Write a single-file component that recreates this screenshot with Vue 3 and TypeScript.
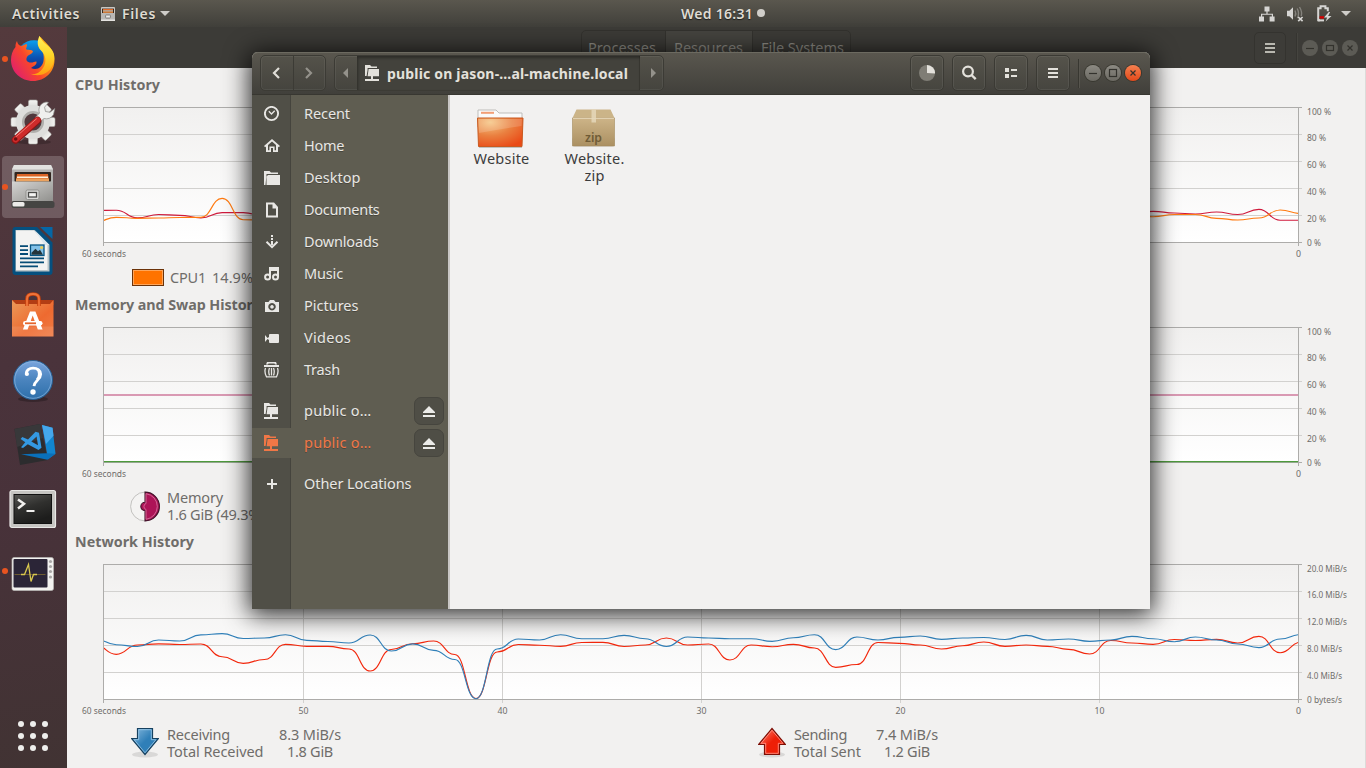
<script setup lang="ts">
interface Series { color: string; values: number[] }
interface Chart { top: number; ticks: { x: number; text: string }[]; labels: { text: string; width: number }[]; series: Series[] }

// Stretches or tightens a label's tracking so that it fills the given width.
const vFit = {
  mounted(el: HTMLElement, binding: { value: number }) {
    const count = (el.textContent || '').length
    if (!count) return
    const natural = el.getBoundingClientRect().width
    el.style.letterSpacing = ((binding.value - natural) / count).toFixed(3) + 'px'
  },
}

const FIRST_X = 95.1
const STEP = 21.16
const labelBaselines = [8, 34, 61, 88, 115, 139]
const timeTicks = [
  { x: 303.5, text: '50' }, { x: 502.5, text: '40' }, { x: 701.5, text: '30' },
  { x: 900.5, text: '20' }, { x: 1099.5, text: '10' },
]

function curve(values: number[], top: number): string {
  let d = ''
  values.forEach((v, i) => {
    const x = FIRST_X + i * STEP
    const y = v - top
    if (i === 0) d = `M${x.toFixed(1)} ${y.toFixed(1)}`
    else {
      const mid = (x - STEP / 2).toFixed(1)
      d += `C${mid} ${(values[i - 1] - top).toFixed(1)} ${mid} ${y.toFixed(1)} ${x.toFixed(1)} ${y.toFixed(1)}`
    }
  })
  return d
}

const flat = (v: number, n: number): number[] => Array.from({ length: n }, () => v)

const percent = [
  { text: '100 %', width: 24 }, { text: '80 %', width: 19 }, { text: '60 %', width: 19 },
  { text: '40 %', width: 19 }, { text: '20 %', width: 19 }, { text: '0 %', width: 14 },
]

const cpu: Chart = {
  top: 107,
  ticks: [],
  labels: percent,
  series: [
    { color: '#cf1a3c', values: [210.5, 210.2, 217.9, 214.5, 215.3, 217.8, 212.6, 212.6, 216, ...flat(214, 41), 211.3, 213, 214, 212, 214.5, 209.3, 220.2, 220.2] },
    { color: '#ff7a10', values: [222, 217.3, 218.3, 218, 217.5, 217.3, 198.4, 219.7, 220, ...flat(216, 41), 216.7, 214.5, 214.5, 218.3, 220, 218, 210, 213.5] },
  ],
}
const memory: Chart = {
  top: 327,
  ticks: [],
  labels: percent,
  series: [
    { color: '#b93c70', values: flat(395, 58) },
    { color: '#4e9a3c', values: flat(461.6, 58) },
  ],
}
const network: Chart = {
  top: 564,
  ticks: timeTicks,
  labels: [
    { text: '20.0 MiB/s', width: 40 }, { text: '16.0 MiB/s', width: 40 }, { text: '12.0 MiB/s', width: 40 },
    { text: '8.0 MiB/s', width: 35 }, { text: '4.0 MiB/s', width: 35 }, { text: '0 bytes/s', width: 35 },
  ],
  series: [
    { color: '#f2270c', values: [645, 654.3, 645, 643.8, 644.5, 644, 656.7, 663.3, 659.5, 644.3, 646.3, 646.3, 649, 671, 649.5, 643.7, 641, 654.5, 698.5, 652, 644.5, 645.2, 646.3, 642.5, 642.3, 646.5, 645, 638, 645, 644, 660, 645, 646.7, 644.3, 648, 667.3, 664.5, 642.5, 643.3, 645, 649, 645.7, 642, 646.3, 645, 646.3, 649.3, 654, 640.5, 643, 644.3, 639.5, 640.5, 639.3, 643, 636.3, 652.7, 642] },
    { color: '#2f7fb8', values: [639, 644.7, 646.5, 640, 641, 634.8, 633.6, 638.5, 638, 634.7, 640.3, 641.5, 643, 635, 651, 643.8, 650.3, 659.5, 698.7, 649, 639, 640, 634.7, 638.7, 638.7, 635.3, 638.7, 646.5, 637, 638, 638.7, 638.7, 641.3, 637.7, 634.7, 649.6, 637, 640, 637.3, 636, 639.3, 638, 637.5, 639.5, 635.3, 640, 639, 641.3, 640, 636.3, 638.7, 641.7, 637, 640, 644, 647.6, 639, 634.5] },
  ],
}

const sections = [
  { id: 'cpu', title: 'CPU History', width: 85, chart: cpu },
  { id: 'mem', title: 'Memory and Swap History', width: 186, chart: memory },
  { id: 'net', title: 'Network History', width: 119, chart: network },
]

const netFolder = 'M0 0h5l1.5 1.5H12V3H2.6v2L1.6 11H0zM3.6 4H14v7.3H8V14h6v2H0v-2h6v-2.7H2.6z'
const places = [
  { name: 'Recent', width: 46, icon: 'recent' },
  { name: 'Home', width: 40, icon: 'home' },
  { name: 'Desktop', width: 56.5, icon: 'desktop' },
  { name: 'Documents', width: 75.5, icon: 'doc' },
  { name: 'Downloads', width: 74.5, icon: 'down' },
  { name: 'Music', width: 39, icon: 'music' },
  { name: 'Pictures', width: 54.5, icon: 'camera' },
  { name: 'Videos', width: 47, icon: 'video' },
  { name: 'Trash', width: 36, icon: 'trash' },
  { name: 'public o…', width: 67.5, icon: 'net', eject: true, gap: true },
  { name: 'public o…', width: 67.5, icon: 'net', eject: true, active: true },
  { name: 'Other Locations', width: 107.5, icon: 'plus', gap: true },
]
const dock = ['firefox', 'settings', 'files', 'writer', 'software', 'help', 'code', 'terminal', 'monitor']
const running = ['firefox', 'files', 'monitor']
const appDots = [0, 1, 2, 3, 4, 5, 6, 7, 8]
const cogTeeth = [0, 45, 90, 135, 180, 225, 270, 315]
</script>

<template>
  <div class="screen">
    <header class="topbar">
      <div class="tb-left">
        <span v-fit="68" class="tb-text">Activities</span>
        <svg class="tb-files" width="14" height="14" viewBox="0 0 14 14">
          <rect width="14" height="14" rx="1" fill="#c9c7c2" />
          <rect x="1" y="1.6" width="12" height="4.4" fill="#3b2a1e" />
          <rect x="2" y="2" width="10" height="1.2" fill="#e06a2a" />
          <rect x="2" y="3.4" width="10" height="1.2" fill="#f3e3cf" />
          <rect x="2" y="4.6" width="10" height="1.2" fill="#ef8a3c" />
          <rect x="0" y="6" width="14" height="6.5" fill="#b9b8b5" />
          <rect x="4.6" y="8" width="4.8" height="3" rx=".6" fill="#ececea" stroke="#6c6b68" stroke-width=".8" />
          <rect x="0" y="12.6" width="14" height="1.4" fill="#e4e3e0" />
        </svg>
        <span v-fit="34" class="tb-text">Files</span>
        <svg width="10" height="5" viewBox="0 0 10 5"><path d="M0 0h10L5 5z" fill="#cfcdc9" /></svg>
      </div>
      <div class="clock"><span v-fit="72" class="tb-text">Wed 16:31</span><i class="clock-dot"></i></div>
      <div class="tray">
        <svg width="16" height="16" viewBox="0 0 16 16" fill="#d6d5d3">
          <path d="M5.5 0.5h5v5h-5zM0 10.5h5v5H0zM10.6 10.5h5v5h-5zM7.4 5h1.2v2.8H14V11h-1.2V8.8H3.2V11H2V7.8h5.4z" />
        </svg>
        <svg width="17" height="16" viewBox="0 0 17 16">
          <path d="M0 4.8h2.4L6 1.2v12.6L2.4 10.2H0z" fill="#d6d5d3" />
          <g fill="none" stroke="#85837d" stroke-width="1.4">
            <path d="M8 4.5q1.6 3 0 6M10.2 2.5q2.6 5 .2 9.6M12.5 1q3 5 1.7 9" />
          </g>
          <path d="M11.2 11l4.4 4.2M15.6 11l-4.4 4.2" stroke="#d6d5d3" stroke-width="1.7" />
        </svg>
        <svg width="15" height="17" viewBox="0 0 15 17">
          <path d="M3 15.3H1.2V3.3h2.4V1.2h4.8v2.1h2.4v3" fill="none" stroke="#d6d5d3" stroke-width="2" />
          <path d="M1 14.4h6v2H1z" fill="#d6d5d3" />
          <rect x="2.6" y="11.2" width="4.4" height="2.4" fill="#d40000" />
          <path d="M11.8 7L7 12.6h3.2L8.6 16.6l5.9-5.6h-3.4l2-4z" fill="#d6d5d3" />
        </svg>
        <svg width="10" height="5" viewBox="0 0 10 5"><path d="M0 0h10L5 5z" fill="#cfcdc9" /></svg>
      </div>
    </header>

    <div class="body">
      <nav class="dock">
        <div v-for="app in dock" :key="app" class="dock-item" :class="{ current: app === 'files' }">
          <i v-if="running.includes(app)" class="run-dot"></i>
          <svg class="dock-icon" width="48" height="48" viewBox="0 0 48 48">
            <template v-if="app === 'firefox'">
              <circle cx="25" cy="23" r="17.8" fill="url(#ffBlue)" />
              <path d="M8 6C8.5 9 10 10.5 12.5 11L16 9.5C17 9 18.5 9 18 10.5L17 14C18.5 15.5 23 14 24 16.5C23 19.5 19 19.5 18 22C16.5 25 18 27.5 22 27.5C25 27.5 28 25 27.5 27.5C27.5 30 24 31.5 22 33C28 36 33.5 32 34.5 26C35.5 19 33 15 31 11L30 1C33 3 36 7 39 10C43 14 45.5 20 45.5 25C45.5 37 36 46 24 46C12 46 2 37 2 25C2 20 3.5 15.5 6.5 12C6.3 9.5 7 7.5 8 6Z" fill="url(#ffOrange)" />
              <path d="M30.5 1C28 6 28 11 31.5 15C37 20 38 27 34 33C30 39 25 40 21 38.5C28 42 38 40 42 33C46 27 46.5 20 43 15C38 9 33.5 8 30.5 1Z" fill="url(#ffYellow)" />
            </template>
            <g v-else-if="app === 'settings'" transform="translate(0 -1)">
              <ellipse cx="25" cy="44" rx="17" ry="2.5" fill="#000" opacity=".2" />
              <g fill="url(#cog)" stroke="#a9a8a5" stroke-width=".6">
                <rect v-for="a in cogTeeth" :key="a" x="19.5" y="2" width="9" height="11" rx="1.5" :transform="`rotate(${a} 24 24)`" />
              </g>
              <circle cx="24" cy="24" r="13.3" fill="none" stroke="#dededc" stroke-width="7.5" />
              <circle cx="24" cy="24" r="9.8" fill="none" stroke="#b0afac" stroke-width="2.5" />
              <path d="M28 22L35 16" stroke="#d6d5d2" stroke-width="6" />
              <path d="M44.5 16.5A8 8 0 0 1 35 20.5L31.5 23.5 27 18.8 30.5 15A8 8 0 0 1 38 4l1.5.6L35.5 9.2 36.5 13.5 41 14.3 45.800 10.5z" fill="#f0f0ee" stroke="#8a8986" stroke-width=".7" />
              <path d="M28.5 22.5L6.5 42" stroke="#8e1515" stroke-width="7.5" stroke-linecap="round" />
              <path d="M28.5 22L6.5 41.5" stroke="#cf2b2b" stroke-width="5.8" stroke-linecap="round" />
              <path d="M27.5 20.8L7 38.7" stroke="#ef7b72" stroke-width="1" stroke-linecap="round" />
              <circle cx="6.7" cy="41" r="1.8" fill="#6d1010" />
            </g>
            <template v-else-if="app === 'files'">
              <path d="M5 2h37l2 4v32H3V6z" fill="#b5b4b2" />
              <path d="M5 2h37l2 4.5H3z" fill="#e2e2e0" />
              <rect x="5.5" y="9" width="36.5" height="10" rx="1" fill="#31261f" />
              <path d="M8 11h31l1 7H7z" fill="#dc6425" />
              <path d="M8 13.5h31v1.5H8z" fill="#fff2dc" />
              <path d="M7 15.5h33v3H7z" fill="#eba25e" />
              <rect x="3" y="18.5" width="41" height="20" fill="url(#cabinet)" />
              <rect x="17" y="27" width="13" height="9.5" rx="1.5" fill="#d8d8d6" stroke="#8e8e8b" stroke-width="1" />
              <rect x="19.5" y="29.5" width="8" height="4.5" fill="#f4f4f2" stroke="#4b4b49" stroke-width="1.3" />
              <rect x="2.5" y="38" width="43" height="7" rx="2.5" fill="#454543" />
              <rect x="3.5" y="39" width="12" height="4.5" rx="1.5" fill="#ecebe9" />
            </template>
            <template v-else-if="app === 'writer'">
              <path d="M6 0h22l15.5 15.5V45q0 3-3 3H6.5q-3 0-3-3V3q0-3 3-3z" fill="#05507f" />
              <path d="M31 0h12.5v12z" fill="#0567a6" />
              <path d="M6.5 3h19L40.5 18v26.5h-34z" fill="#b9c4c8" />
              <path d="M7 3.5h18L38.5 18v25H7z" fill="#f3f3f2" />
              <path d="M25.5 3L40.5 18h-5z" fill="#dbe7ee" />
              <g stroke="#064c76" stroke-width="1.8">
                <path d="M11 19.2h8M11 23.2h8M11 27h8M11 31.3h24M11 35.3h24M11 39.3h18" />
              </g>
              <rect x="21.5" y="18" width="13.5" height="10.5" fill="#82c1e8" stroke="#075481" stroke-width="1.3" />
              <path d="M22.5 27.8v-2l4-4 2.5 2.5 2-1.5 3 5z" fill="#24343a" />
              <circle cx="32.6" cy="20.5" r="1.6" fill="#e8cb55" />
            </template>
            <template v-else-if="app === 'software'">
              <path d="M3 9h41.5v5H3z" fill="#b33d14" />
              <path d="M3 9l4 4h34l3.5-4V45.5H3z" fill="url(#bag)" />
              <path d="M18 15V8q0-5 6-5t6 5v7" fill="none" stroke="#c8430f" stroke-width="3.6" />
              <path d="M18 15V8q0-5 6-5t6 5v7" fill="none" stroke="#f0743a" stroke-width="1.8" />
              <path d="M3 35.5h41.5v10H3z" fill="#fff" opacity=".1" />
              <path d="M21 20.5h5.4l7.2 18h-4.8l-5.1-14-5.1 14h-4.7z" fill="#fff" />
              <rect x="14" y="30" width="19.5" height="4.5" rx="2.2" fill="#fff" />
              <rect x="16" y="31.4" width="11" height="1.8" fill="#e5652d" />
            </template>
            <g v-else-if="app === 'help'" transform="translate(0 1)">
              <ellipse cx="24" cy="43" rx="15" ry="3" fill="#000" opacity=".25" />
              <circle cx="24" cy="24" r="19.5" fill="url(#help)" stroke="#285f92" stroke-width="1" />
              <circle cx="24" cy="24" r="18.3" fill="none" stroke="#8db7e0" stroke-width="1" opacity=".7" />
              <path d="M17.3 18.5C17 14 20.5 12.2 24 12.2c4.5 0 7.7 2.3 7.7 6 0 5.3-6.2 6-6.7 12" fill="none" stroke="#fff" stroke-width="2.8" />
              <circle cx="17.9" cy="18" r="2.1" fill="#fff" />
              <path d="M28 13c3 2 3 7.5 0 10.5" fill="none" stroke="#fff" stroke-width="2.6" />
              <circle cx="24" cy="36" r="2.7" fill="#fff" />
            </g>
            <g v-else-if="app === 'code'" transform="translate(0 1)">
              <path d="M5.5 9L31 4l8 36L11 45z" fill="#2c2c2e" />
              <path d="M5.5 9L31 4l3 14L8 27z" fill="#38383a" />
              <path d="M33 5l10.5 2.8 3 26-7.5 5.5z" fill="#1285cf" />
              <path d="M33 5l10.5 2.8 1 8L37 24z" fill="#45a7ec" />
              <path d="M12 34.2l25-1 9.5.6-8 6z" fill="#0a70ba" />
              <path d="M26.5 11.7L30 12.7 32.5 27.7 29.5 30 18.8 24.3 14 28 12 27.3 16.3 22.2 11.6 19 13.3 17 19 19.4zM27.6 16.5L22.3 21.5 29 25.3z" fill="#3499e2" fill-rule="evenodd" />
            </g>
            <g v-else-if="app === 'terminal'" transform="translate(0 2)">
              <rect x="1" y="5.5" width="45.5" height="37" rx="2" fill="#c6c5c2" stroke="#e9e8e6" stroke-width="1.2" />
              <rect x="4.5" y="9" width="38.5" height="30" fill="#111" />
              <rect x="5.5" y="10" width="36.5" height="28" fill="url(#term)" />
              <path d="M9 14.5l6 4.3-6 4.7" fill="none" stroke="#f1f0ee" stroke-width="2.5" />
              <path d="M17.5 26h8" stroke="#f1f0ee" stroke-width="2" />
            </g>
            <g v-else transform="translate(0 3)">
              <rect x="3" y="7.5" width="41.5" height="33" rx="2" fill="#f3f2f0" stroke="#b9b7b5" stroke-width=".7" />
              <rect x="4.5" y="9" width="34" height="28.5" rx="1" fill="#2b2537" />
              <path d="M5.5 24.5h31" stroke="#6d5b32" stroke-width="1" />
              <path d="M12 24.5h3.5l4-10 2.5 17 2.5-7h3.5" fill="none" stroke="#d9c84e" stroke-width="1.3" />
              <g fill="#a9a7a6"><circle cx="41.5" cy="11.5" r="1.6" /><circle cx="41.5" cy="16.5" r="1.6" /><circle cx="41.5" cy="21.5" r="1.6" /><circle cx="41.5" cy="27" r="1.6" /></g>
            </g>
          </svg>
        </div>
        <div class="apps"><i v-for="d in appDots" :key="d"></i></div>
      </nav>

      <main class="monitor">
        <div class="mon-head">
          <div class="tabs">
            <span class="tab"><b v-fit="68">Processes</b></span>
            <span class="tab on"><b v-fit="69">Resources</b></span>
            <span class="tab"><b v-fit="83">File Systems</b></span>
          </div>
          <div class="mon-controls">
            <span class="mon-menu"><svg width="10" height="10" viewBox="0 0 10 10"><path d="M0 0h10v2H0zM0 4h10v2H0zM0 8h10v2H0z" fill="#b9b8b0" /></svg></span>
            <i class="sep dim"></i>
            <span class="win-btn dim"><svg width="16" height="16"><path d="M4 8.5h8" /></svg></span>
            <span class="win-btn dim"><svg width="16" height="16"><rect x="4.5" y="5.5" width="7" height="5" /></svg></span>
            <span class="win-btn dim"><svg width="16" height="16"><path d="M5.5 5.5l5 5m0-5l-5 5" /></svg></span>
          </div>
        </div>

        <section v-for="s in sections" :key="s.id" class="panel" :class="s.id">
          <h2><span v-fit="s.width">{{ s.title }}</span></h2>
          <svg class="chart" width="1299" height="164" viewBox="67 -7 1299 164">
            <rect x="103" y="0" width="1195" height="135" fill="url(#plot)" />
            <g stroke="#d2d1cf">
              <path v-for="n in 4" :key="n" :d="`M103 ${n * 27 + 0.5}H1302`" />
              <path v-for="t in s.chart.ticks" :key="t.x" :d="`M${t.x} 0V139`" />
            </g>
            <path d="M103 .5H1302M103 135.5H1302M103.5 0V139M1298.5 0V139" stroke="#adacaa" fill="none" />
            <svg x="104" y="0" width="1194" height="136" viewBox="104 0 1194 136">
              <path v-for="line in s.chart.series" :key="line.color" :d="curve(line.values, s.chart.top)" :stroke="line.color" fill="none" stroke-width="1.15" />
            </svg>
            <g class="axis">
              <text v-for="(l, i) in s.chart.labels" :key="l.text" x="1307" :y="labelBaselines[i]" :textLength="l.width" lengthAdjust="spacingAndGlyphs">{{ l.text }}</text>
              <text x="82" y="150" textLength="44" lengthAdjust="spacingAndGlyphs">60 seconds</text>
              <text v-for="t in s.chart.ticks" :key="t.text" :x="t.x - 5" y="150" textLength="10" lengthAdjust="spacingAndGlyphs">{{ t.text }}</text>
              <text x="1296" y="150" textLength="5" lengthAdjust="spacingAndGlyphs">0</text>
            </g>
          </svg>

          <div v-if="s.id === 'cpu'" class="legend">
            <i class="swatch"></i><span v-fit="36" class="cpu-name">CPU1</span><span v-fit="41">14.9%</span>
          </div>
          <div v-else-if="s.id === 'mem'" class="legend">
            <svg class="pie" width="30" height="31" viewBox="0 0 30 31">
              <circle cx="15" cy="15.5" r="14.4" fill="#f4f3f2" stroke="#c2c1bf" />
              <path d="M15 1.1a14.4 14.4 0 0 1 0 28.8V19.7a4.2 4.2 0 0 1 0-8.4z" fill="#ad1457" stroke="#43142b" stroke-width="1.1" />
              <path d="M16 2.7a12.9 12.9 0 0 1 0 25.6V18.5a3.2 3.2 0 0 1 0-6z" fill="none" stroke="#d979a3" stroke-width=".8" />
            </svg>
            <div class="lines"><span v-fit="56">Memory</span><span v-fit="97">1.6 GiB (49.3%)</span></div>
          </div>
          <div v-else class="legend">
            <svg class="arrow" width="28" height="32" viewBox="0 0 28 32">
              <ellipse cx="14" cy="27.5" rx="13" ry="3" fill="#000" opacity=".1" />
              <path d="M6.5 1.5h15v10h6L14 27.5.5 11.5h6z" fill="url(#down)" stroke="#17415f" stroke-width="1.2" />
              <path d="M7.7 2.7h12.6v10h4.6L14 25.8 3.1 12.7h4.6z" fill="none" stroke="#9cc8e6" stroke-width=".8" />
            </svg>
            <div class="lines wide"><span v-fit="63">Receiving</span><span v-fit="96.5">Total Received</span></div>
            <div class="lines mid"><span v-fit="62">8.3 MiB/s</span><span v-fit="46">1.8 GiB</span></div>
            <svg class="arrow second" width="28" height="32" viewBox="0 0 28 32">
              <ellipse cx="14" cy="27.5" rx="13" ry="3" fill="#000" opacity=".1" />
              <path d="M6.5 27.5h15v-10h6L14 1.5.5 17.5h6z" fill="url(#up)" stroke="#7c0f06" stroke-width="1.2" />
              <path d="M7.7 26.3h12.6v-10h4.6L14 3.2 3.1 16.3h4.6z" fill="none" stroke="#ff9d91" stroke-width=".8" />
            </svg>
            <div class="lines sent"><span v-fit="53">Sending</span><span v-fit="67">Total Sent</span></div>
            <div class="lines mid"><span v-fit="62">7.4 MiB/s</span><span v-fit="46">1.2 GiB</span></div>
          </div>
        </section>
      </main>
    </div>

    <div class="files">
      <div class="files-head">
        <div class="group nav">
          <span class="btn lit"><svg width="8" height="12" viewBox="0 0 8 12"><path d="M7 1L2 6l5 5" fill="none" stroke="#e0ded8" stroke-width="2.2" /></svg></span>
          <span class="btn"><svg width="8" height="12" viewBox="0 0 8 12"><path d="M1 1l5 5-5 5" fill="none" stroke="#94928b" stroke-width="2.2" /></svg></span>
        </div>
        <div class="group path">
          <span class="step"><svg width="5" height="10"><path d="M5 0v10L0 5z" fill="#94928b" /></svg></span>
          <span class="crumb">
            <svg width="14" height="16" viewBox="0 0 14 16"><path :d="netFolder" fill="#e3e1db" /></svg>
            <b v-fit="241">public on jason-…al-machine.local</b>
          </span>
          <span class="step last"><svg width="5" height="10"><path d="M0 0v10l5-5z" fill="#94928b" /></svg></span>
        </div>
        <div class="tools">
          <span class="tool"><svg width="16" height="16" viewBox="0 0 16 16"><circle cx="8" cy="8" r="8" fill="#7f7d75" /><path d="M8 8V0a8 8 0 0 1 8 8.5z" fill="#e3e1db" /></svg></span>
          <span class="tool"><svg width="16" height="16" viewBox="0 0 16 16"><circle cx="7" cy="6.5" r="4.9" fill="none" stroke="#e3e1db" stroke-width="2.2" /><path d="M10.5 10l4.2 4.2" stroke="#e3e1db" stroke-width="2.4" /></svg></span>
          <span class="tool"><svg width="12" height="10" viewBox="0 0 12 10"><path d="M0 0h4v4H0zM0 6h4v4H0zM6 1h6v2H6zM6 7h6v2H6z" fill="#e3e1db" /></svg></span>
          <span class="tool"><svg width="10" height="10" viewBox="0 0 10 10"><path d="M0 0h10v2H0zM0 4h10v2H0zM0 8h10v2H0z" fill="#e3e1db" /></svg></span>
          <i class="sep"></i>
          <span class="win-btn"><svg width="16" height="16"><path d="M4 8.5h8" /></svg></span>
          <span class="win-btn"><svg width="16" height="16"><rect x="4.5" y="4.5" width="7" height="7" /></svg></span>
          <span class="win-btn close"><svg width="16" height="16"><path d="M5.5 5.5l5 5m0-5l-5 5" /></svg></span>
        </div>
      </div>
      <div class="files-body">
        <aside class="side">
          <div v-for="(p, i) in places" :key="i" class="place" :class="{ gap: p.gap, active: p.active }">
            <span class="place-icon">
              <svg width="16" height="16" viewBox="0 0 16 16" fill="currentColor">
                <g v-if="p.icon === 'recent'" fill="none" stroke="currentColor"><circle cx="7.5" cy="7.5" r="6.6" stroke-width="1.9" /><path d="M4.8 5.2L7.5 8l3.2-3.2" stroke-width="1.3" /></g>
                <path v-else-if="p.icon === 'home'" d="M8 1l8 7-1.2 1.3L14 8.6V14H9v-4H7v4H2V8.6l-.8.7L0 8zm0 2.6L4 7.1V12.2h1.4V8.5h5.2v3.7H12V7.1z" fill-rule="evenodd" />
                <path v-else-if="p.icon === 'desktop'" d="M0 1h5.5L7 2.5h7V4H2.5v1L1.5 15H0zM4 5h12v10H2.5V6.5z" />
                <path v-else-if="p.icon === 'doc'" d="M2 .5h8L14 5v10.5H2zM4 2.5v11h8V6.5H8.5v-4z" fill-rule="evenodd" />
                <g v-else-if="p.icon === 'down'"><path d="M7 1h2v2H7zM7 4h2v2H7zM7 7h2v4H7z" /><path d="M2.5 7.8L8 13.2l5.5-5.4" fill="none" stroke="currentColor" stroke-width="2" /></g>
                <g v-else-if="p.icon === 'music'"><path d="M5 1h10v10h-2V5H7v6H5z" /><circle cx="3.6" cy="11" r="2.5" fill="none" stroke="currentColor" stroke-width="2" /><circle cx="11.5" cy="11" r="2.5" fill="none" stroke="currentColor" stroke-width="2" /></g>
                <path v-else-if="p.icon === 'camera'" d="M1 4h3.5L6 2h4l1.5 2H15v10H1zM8 5a3.7 3.7 0 1 0 .01 0zM8 7a1.8 1.8 0 1 1-.01 0z" fill-rule="evenodd" />
                <path v-else-if="p.icon === 'video'" d="M5.5 4H14q1 0 1 1v7q0 1-1 1H6q-1 0-1-1v-2l-1.5-1L1 12V5l2.5 3L5 7V5z" />
                <g v-else-if="p.icon === 'trash'"><path d="M0 3h15v2H0zM3 0h9l1 2.5h-2L10.5 1.6h-6L4 2.5H2z" /><path d="M1.5 6q-1.5 4 1 8.8h10q2.5-4.8 1-8.8M5.5 6q-1.5 3.5 0 7.5M7.5 6v7.5M9.5 6q1.5 3.5 0 7.5" fill="none" stroke="currentColor" stroke-width="1.3" /></g>
                <path v-else-if="p.icon === 'net'" :d="netFolder" />
                <path v-else d="M7 3h2v4h4v2H9v4H7V9H3V7h4z" />
              </svg>
            </span>
            <span class="place-label"><b v-fit="p.width">{{ p.name }}</b></span>
            <span v-if="p.eject" class="eject"><svg width="12" height="11" viewBox="0 0 12 11"><path d="M6 0l6 6v1H0V6zM0 9h12v2H0z" fill="#ebebe8" /></svg></span>
          </div>
        </aside>
        <div class="content">
          <div class="file">
            <svg width="48" height="42" viewBox="0 0 48 42">
              <path d="M2 3h18l3 3h23v14H2z" fill="#fafafa" stroke="#bebdbb" stroke-width="1" />
              <rect x="5" y="4.8" width="13" height="2" fill="#f29e75" />
              <path d="M1.5 11h45.5l-1 28.5H2.5z" fill="url(#folder)" stroke="#c95a20" stroke-width="1" />
              <path d="M2.5 12h43.5l-.5 7Q25 22 3 26z" fill="#fff" opacity=".16" />
              <path d="M3 40.5h43" stroke="#000" opacity=".2" />
            </svg>
            <span v-fit="56">Website</span>
          </div>
          <div class="file">
            <svg width="48" height="42" viewBox="0 0 48 42">
              <rect x="3" y="30" width="43" height="9.5" rx="3" fill="#000" opacity=".15" />
              <path d="M7.5 2.5h34L45.5 11H3.5z" fill="#cbb488" />
              <path d="M3.5 11h42v28h-42z" fill="url(#box)" stroke="#a58c5c" stroke-width=".6" />
              <path d="M4 11.3h41" stroke="#e9dcc0" />
              <path d="M22.5 2.5h4.500v13h-4.500z" fill="#e6d9bd" opacity=".8" />
              <text x="16" y="35" textLength="17" lengthAdjust="spacingAndGlyphs" class="zip-mark">zip</text>
            </svg>
            <span v-fit="60">Website.</span>
            <span v-fit="20">zip</span>
          </div>
        </div>
      </div>
    </div>

    <svg class="defs" width="0" height="0">
      <defs>
        <linearGradient id="plot" x1="0" y1="0" x2="0" y2="1"><stop offset="0" stop-color="#f1f0ef" /><stop offset="1" stop-color="#fff" /></linearGradient>
        <linearGradient id="ffBlue" x1="0" y1="0" x2="0" y2="1"><stop offset="0" stop-color="#0aa0ee" /><stop offset=".5" stop-color="#0b50b0" /><stop offset="1" stop-color="#1c1a6b" /></linearGradient>
        <linearGradient id="ffOrange" x1="1" y1="0" x2="0" y2=".75"><stop offset="0" stop-color="#ffcf20" /><stop offset=".35" stop-color="#ff9a12" /><stop offset=".65" stop-color="#f8452c" /><stop offset="1" stop-color="#e0206e" /></linearGradient>
        <linearGradient id="ffYellow" x1="0" y1="0" x2="0" y2="1"><stop offset="0" stop-color="#fff15a" /><stop offset=".5" stop-color="#fdd528" /><stop offset="1" stop-color="#ff9d12" /></linearGradient>
        <linearGradient id="cog" x1="0" y1="0" x2="0" y2="1"><stop offset="0" stop-color="#f4f4f2" /><stop offset="1" stop-color="#cfcecb" /></linearGradient>
        <linearGradient id="cabinet" x1="0" y1="0" x2="1" y2="1"><stop offset="0" stop-color="#d5d4d2" /><stop offset="1" stop-color="#90908d" /></linearGradient>
        <linearGradient id="bag" x1="0" y1="0" x2="1" y2="1"><stop offset="0" stop-color="#eb9a59" /><stop offset=".6" stop-color="#ee6a30" /><stop offset="1" stop-color="#ef7c46" /></linearGradient>
        <linearGradient id="help" x1="0" y1="0" x2="0" y2="1"><stop offset="0" stop-color="#7ba5de" /><stop offset=".5" stop-color="#4a84be" /><stop offset="1" stop-color="#2d6faa" /></linearGradient>
        <linearGradient id="term" x1="0" y1="0" x2=".4" y2="1"><stop offset="0" stop-color="#555552" /><stop offset=".5" stop-color="#30302e" /><stop offset="1" stop-color="#1d1d1c" /></linearGradient>
        <linearGradient id="down" x1="0" y1="0" x2="1" y2="1"><stop offset="0" stop-color="#8bbcdf" /><stop offset=".5" stop-color="#2f7fb8" /><stop offset="1" stop-color="#2f7fb8" /></linearGradient>
        <linearGradient id="up" x1="0" y1="0" x2="1" y2="1"><stop offset="0" stop-color="#ff8f7c" /><stop offset=".5" stop-color="#ee1f07" /><stop offset="1" stop-color="#ee1f07" /></linearGradient>
        <radialGradient id="folder" cx=".28" cy=".15" r=".95"><stop offset="0" stop-color="#f5c583" /><stop offset=".5" stop-color="#ea8040" /><stop offset="1" stop-color="#ea4a16" /></radialGradient>
        <linearGradient id="box" x1="0" y1="0" x2="0" y2="1"><stop offset="0" stop-color="#cdb488" /><stop offset="1" stop-color="#ab9062" /></linearGradient>
      </defs>
    </svg>
  </div>
</template>

<style>
body { margin: 0; overflow: hidden; }
</style>

<style scoped>
.screen { position: relative; width: 1366px; height: 768px; overflow: hidden; display: flex; flex-direction: column; background: #f2f1f0; font: 14.5px/17px "Noto Sans", "Open Sans", sans-serif; color: #6f6d6a; }
span, b { white-space: nowrap; }
b { font-weight: 400; display: inline-block; }
svg { display: block; flex: none; }
.defs { position: absolute; }

.topbar { height: 27px; flex: none; display: grid; grid-template-columns: 1fr auto 1fr; align-items: center; background: linear-gradient(#5a574e, #403f3a); }
.tb-left { display: flex; align-items: center; padding-left: 12px; }
.tb-text { display: inline-block; font-weight: 600; font-size: 14px; color: #dfdbd2; text-shadow: 0 1px 1px rgba(0, 0, 0, .6); }
.tb-files { margin: 0 7px 0 21px; }
.tb-left > svg:last-child { margin-left: 4px; }
.clock { display: flex; align-items: center; padding-left: 80px; }
.clock-dot { width: 8px; height: 8px; border-radius: 50%; background: #d0cec9; margin: 0 0 1px 4px; }
.tray { display: flex; align-items: center; justify-content: flex-end; padding-right: 15px; }
.tray svg:nth-child(2) { margin-left: 12px; }
.tray svg:nth-child(3) { margin-left: 13px; }
.tray svg:nth-child(4) { margin-left: 9px; }

.body { display: flex; flex: 1; min-height: 0; }
.dock { width: 67px; flex: none; display: flex; flex-direction: column; background: linear-gradient(170deg, #543a3d 0, #4a333b 45%, #48323a 65%, #413333 100%); }
.dock-item { position: relative; height: 64px; display: flex; align-items: center; padding-left: 9px; flex: none; }
.dock-item.current::before { content: ""; position: absolute; left: 2px; top: 1px; width: 62px; height: 62px; border-radius: 4px; background: rgba(255, 255, 255, .19); }
.dock-icon { position: relative; }
.run-dot { position: absolute; left: 2px; top: 29px; width: 6px; height: 6px; border-radius: 50%; background: #e95420; }
.apps { margin: auto 0 17px 18px; width: 30px; display: grid; grid-template-columns: repeat(3, 6px); gap: 6px; }
.apps i { width: 6px; height: 6px; border-radius: 50%; background: #eeeeec; }

.monitor { width: 1299px; flex: none; display: flex; flex-direction: column; box-sizing: border-box; background: #f2f1f0; box-shadow: inset -1px 0 #dcdbd9; }
.mon-head { height: 41px; flex: none; background: #3c3b37; display: flex; justify-content: space-between; }
.tabs { display: flex; margin: 3px 0 0 514px; height: 35px; box-sizing: border-box; border: 1px solid #33322e; border-radius: 5px; color: #8f8d86; }
.tab { padding: 8px 9px 0 6px; border-right: 1px solid #33322e; }
.tab.on { background: #45443f; padding: 8px 9px 0 8px; }
.tab:last-child { border: 0; padding-left: 8px; padding-right: 6px; }
.mon-controls { display: flex; align-items: center; padding-right: 8px; }
.mon-menu { width: 30px; height: 30px; margin-right: 10px; border: 1px solid #34332f; border-radius: 5px; display: grid; place-items: center; background: #3d3c38; }
.sep { width: 1px; height: 29px; background: #383731; box-shadow: 1px 0 #57554e; }
.sep.dim { margin: 0 1px 0 0; background: #353430; box-shadow: 1px 0 #45443f; }
.win-btn { width: 16px; height: 16px; margin-left: 4px; border-radius: 50%; background: linear-gradient(#8c8a83, #6b6962); box-shadow: 0 0 0 1px #38372f; }
.win-btn svg { fill: none; stroke: #33322d; stroke-width: 1.2; }
.win-btn.dim { background: #5c5b55; box-shadow: none; }
.win-btn.close { background: linear-gradient(#f5804f, #e2491a); }

.panel { height: 220px; flex: none; }
.panel.mem { height: 237px; }
.panel.net { height: 243px; }
.panel h2 { margin: 0; height: 32px; padding: 8px 0 0 8px; box-sizing: border-box; font-size: 14.3px; line-height: 18px; font-weight: 700; }
.panel h2 span { display: inline-block; }
.axis text { font-size: 9.8px; fill: #6f6d6a; }
.legend { display: flex; padding: 6px 0 0 64px; }
.cpu .legend { padding: 5px 0 0 65px; line-height: 16px; }
.legend span { display: inline-block; }
.swatch { width: 28px; height: 13px; border: 1px solid #6b3208; outline: 1px solid #ffa559; outline-offset: -2px; background: #ff7300; padding: 1px; margin-right: 6px; }
.cpu-name { margin-right: 6px; }
.pie { margin: 1px 7px 0 -1px; }
.lines { display: flex; flex-direction: column; align-items: flex-start; margin-top: -1px; }
.arrow { margin: 0 8px 0 0; }
.wide { width: 112px; }
.mid { width: 62px; align-items: center; }
.second { margin-left: 417px; }
.sent { width: 82px; }

.files { position: absolute; left: 252px; top: 52px; width: 898px; height: 557px; display: flex; flex-direction: column; border-radius: 6px 6px 0 0; box-shadow: 0 3px 24px 3px rgba(0, 0, 0, .82); background: #f2f1f0; }
.files-head { height: 43px; flex: none; box-sizing: border-box; display: flex; align-items: center; padding: 0 9px 1px 8px; border-radius: 6px 6px 0 0; background: linear-gradient(#5a574f, #403f3a); box-shadow: inset 0 1px #6c6a60, inset 0 -1px #383731; }
.group { display: flex; height: 36px; box-sizing: border-box; border: 1px solid #3c3b35; border-radius: 5px; box-shadow: inset 0 0 0 1px rgba(255, 255, 255, .06); background: linear-gradient(#54524a, #45443e); }
.nav { width: 66px; }
.btn { flex: 1; display: grid; place-items: center; }
.btn.lit { border-right: 1px solid #3c3b35; padding-right: 2px; }
.btn:last-child { padding-right: 1px; }
.path { margin-left: 8px; width: 330px; }
.step { width: 22px; display: grid; place-items: center; flex: none; box-sizing: border-box; padding-right: 2px; }
.step.last { width: 23px; padding: 0 0 0 3px; }
.crumb { flex: 1; display: flex; align-items: center; background: #43423c; box-shadow: inset 1px 2px 3px rgba(0, 0, 0, .35), inset -1px 0 #3a3933; padding-left: 8px; color: #e3e1db; }
.crumb b { margin-left: 8px; font-weight: 700; font-size: 14px; }
.tools { margin-left: auto; display: flex; align-items: center; }
.tool { width: 32px; height: 34px; margin-right: 8px; border: 1px solid #3b3a34; border-radius: 5px; display: grid; place-items: center; background: linear-gradient(#55534b, #46453f); box-shadow: inset 0 0 0 1px rgba(255, 255, 255, .07); }
.tools .sep { margin: 0 2px 0 0; }
.tools .sep + .win-btn { margin-left: 4px; }

.files-body { flex: 1; display: flex; min-height: 0; }
.side { width: 196px; box-sizing: border-box; padding-top: 3px; background: linear-gradient(90deg, #504f47 38px, #45443d 38px, #45443d 39px, #5f5d51 39px); color: #e8e7e4; }
.place { height: 32px; display: flex; align-items: center; }
.place.gap { margin-top: 9px; }
.place-icon { width: 39px; height: 30px; padding-left: 12px; box-sizing: border-box; display: flex; align-items: center; }
.place-label { margin-left: 13px; padding-bottom: 2px; text-shadow: 0 1px rgba(0, 0, 0, .25); }
.place.active { color: #f07746; }
.place.active .place-icon { background: #5f5d51; }
.eject { margin: 0 4px 0 auto; width: 28px; height: 26px; border: 1px solid #46453e; border-radius: 7px; background: #4f4e46; display: grid; place-items: center; }
.content { flex: 1; border-left: 2px solid #c9c7c5; background: #f2f1f0; display: flex; padding: 12px 0 0 5px; color: #3c3c3c; }
.file { width: 93px; display: flex; flex-direction: column; align-items: center; }
.file svg { margin: 0 3px 1px 0; }
.file span { display: inline-block; }
.zip-mark { font: 600 12px "Noto Sans", sans-serif; fill: #6f5b36; }
</style>
